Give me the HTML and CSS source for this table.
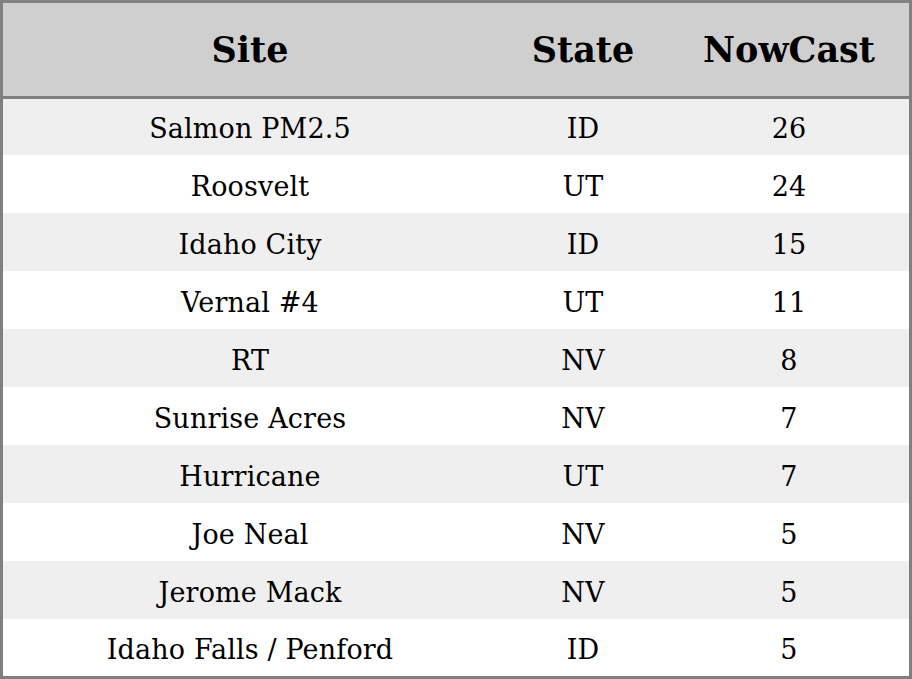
FILE: index.html
```html
<!DOCTYPE html>
<html>
<head>
<meta charset="utf-8">
<link rel="stylesheet" href="styles.css">
</head>
<body>
<table class="aq">
  <colgroup><col class="c-site"><col class="c-state"><col class="c-now"></colgroup>
  <thead>
    <tr><th>Site</th><th>State</th><th>NowCast</th></tr>
  </thead>
  <tbody>
    <tr><td>Salmon PM2.5</td><td>ID</td><td>26</td></tr>
    <tr><td>Roosvelt</td><td>UT</td><td>24</td></tr>
    <tr><td>Idaho City</td><td>ID</td><td>15</td></tr>
    <tr><td>Vernal #4</td><td>UT</td><td>11</td></tr>
    <tr><td>RT</td><td>NV</td><td>8</td></tr>
    <tr><td>Sunrise Acres</td><td>NV</td><td>7</td></tr>
    <tr><td>Hurricane</td><td>UT</td><td>7</td></tr>
    <tr><td>Joe Neal</td><td>NV</td><td>5</td></tr>
    <tr><td>Jerome Mack</td><td>NV</td><td>5</td></tr>
    <tr><td>Idaho Falls / Penford</td><td>ID</td><td>5</td></tr>
  </tbody>
</table>
</body>
</html>
```
FILE: styles.css
```css
html, body { margin: 0; padding: 0; background: #fff; }
.aq {
  width: 912px;
  height: 679px;
  border-collapse: separate;
  border-spacing: 0;
  border: 3px solid #808080;
  box-sizing: border-box;
  table-layout: fixed;
  font-family: "DejaVu Serif", serif;
  color: #000;
}
.c-site { width: 494px; }
.c-state { width: 172px; }
.c-now { width: 240px; }
.aq th {
  height: 96px;
  padding: 0;
  background: #cfcfcf;
  border-bottom: 3px solid #808080;
  font-size: 35px;
  font-weight: bold;
  text-align: center;
  box-sizing: border-box;
}
.aq td {
  padding: 6px 0 0 0;
  box-sizing: border-box;
  text-align: center;
  font-size: 27px;
  line-height: 32px;
  letter-spacing: 0.15px;
  height: 58px;
}
.aq tbody tr:first-child td { height: 56px; padding-top: 4px; }
.aq tbody tr:last-child td { height: 57px; padding-top: 4px; }
.aq tbody tr:nth-child(odd) td { background: #efefef; }
.aq tbody tr:nth-child(even) td { background: #fff; }
```
